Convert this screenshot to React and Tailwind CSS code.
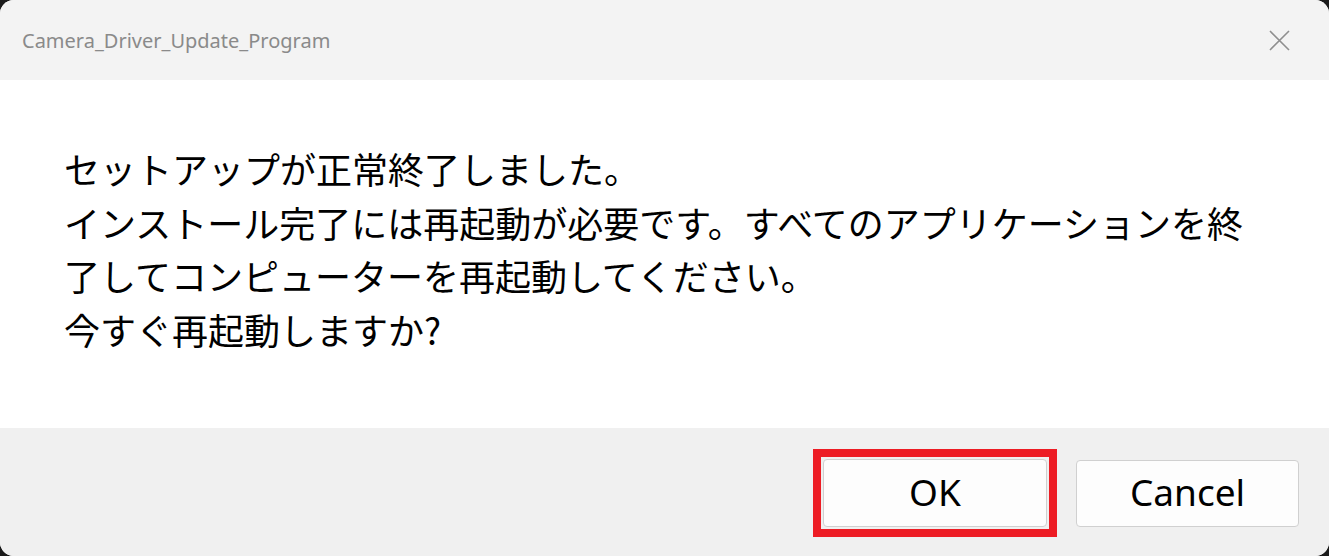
import React from 'react';

// Windows-style message box: title bar, message body, button footer

const lines = [
    'セットアップが正常終了しました。',
    'インストール完了には再起動が必要です。すべてのアプリケーションを終',
    '了してコンピューターを再起動してください。',
    '今すぐ再起動しますか?',
];

const CloseIcon = () => (
    <svg width="21" height="21" viewBox="0 0 21 21" fill="none" stroke="#8f8f8f" strokeWidth="1.6" aria-hidden="true">
        <path d="M1 1 L20 20 M20 1 L1 20" />
    </svg>
);

const App = () => {
    return (
        <div className="h-[556px] w-[1329px] bg-[#1b1b1b] overflow-hidden">
            <div className="h-full flex flex-col rounded-[14px] overflow-hidden bg-white font-['Noto_Sans','Noto_Sans_CJK_JP',sans-serif]">
                {/* Title bar */}
                <div className="h-[80px] flex-shrink-0 bg-[#f3f3f3] flex items-center justify-between pl-[22px] pr-[39px]">
                    <span className="text-[20px] text-[#8a8a8a] mt-[1px]">Camera_Driver_Update_Program</span>
                    <CloseIcon />
                </div>

                {/* Message */}
                <div className="flex-grow bg-white pl-[64px] pt-[62px]">
                    {lines.map((line) => (
                        <p key={line} className="text-[36px] leading-[53.5px] text-black font-['Noto_Sans_CJK_JP',sans-serif] whitespace-nowrap">
                            {line}
                        </p>
                    ))}
                </div>

                {/* Buttons */}
                <div className="h-[128px] flex-shrink-0 bg-[#f0f0f0] flex items-start justify-end gap-[19px] pt-[21px] pr-[30px]">
                    <div className="border-[8px] border-[#ed1c24] p-[2px]">
                        <button className="block w-[224px] h-[68px] bg-[#fdfdfd] border border-[#d0d0d0] rounded-[4px] text-[37px] leading-none text-black pb-[4px]">
                            OK
                        </button>
                    </div>
                    <button className="mt-[11px] w-[223px] h-[67px] bg-[#fdfdfd] border border-[#d0d0d0] rounded-[4px] text-[37px] leading-none text-black pb-[4px]">
                        Cancel
                    </button>
                </div>
            </div>
        </div>
    );
};

export default App;
